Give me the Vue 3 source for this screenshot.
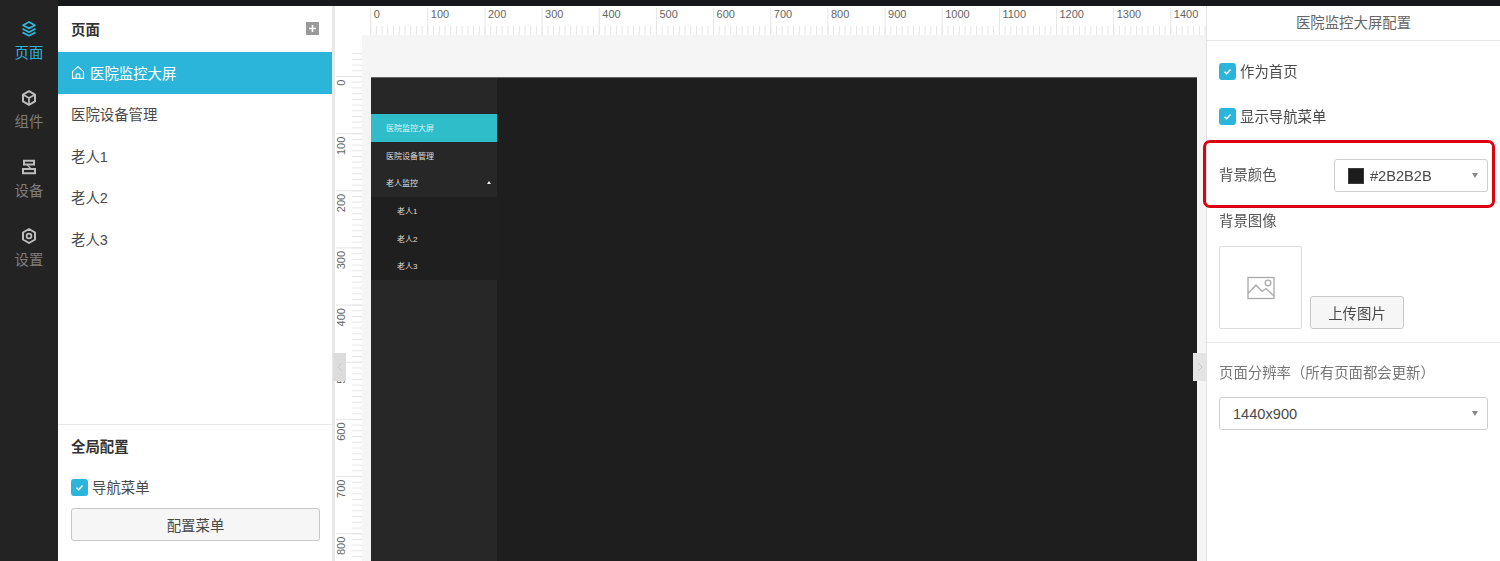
<script setup>
const SCALE = 0.5715
const hMajors = Array.from({ length: 15 }, (_, i) => i * 100)
const vMajors = Array.from({ length: 9 }, (_, i) => i * 100)
const hOrigin = 8.7
const vOrigin = 41.5
const hMinor = Array.from({ length: 150 }, (_, i) => +(hOrigin + i * 10 * SCALE).toFixed(1))
const vMinor = Array.from({ length: 96 }, (_, i) => +(i * 10 * SCALE + vOrigin - 40 * SCALE).toFixed(1))
const hx = (n) => +(hOrigin + n * SCALE).toFixed(1)
const vy = (n) => +(vOrigin + n * SCALE).toFixed(1)
const navItems = [
  { label: '页面', icon: 'layers', active: true },
  { label: '组件', icon: 'cube' },
  { label: '设备', icon: 'device' },
  { label: '设置', icon: 'gear' }
]
const pages = ['医院设备管理', '老人1', '老人2', '老人3']
const subs = ['老人1', '老人2', '老人3']
</script>

<template>
  <div class="app">
    <div class="topbar"><span class="top-left"></span></div>
    <div class="body">
      <nav class="nav">
        <div v-for="n in navItems" :key="n.label" class="nav-item" :class="{ active: n.active }">
          <svg class="nav-icon" width="18" height="18" viewBox="0 0 18 18" fill="none" stroke="currentColor" stroke-width="2" stroke-linejoin="round">
            <template v-if="n.icon === 'layers'">
              <path d="M9 2 15 5.2 9 8.4 3 5.2Z" stroke-width="1.8" />
              <path d="M2.5 8.8 9 12.2 15.5 8.8" stroke-width="1.8" />
              <path d="M2.5 12.4 9 15.8 15.5 12.4" stroke-width="1.8" />
            </template>
            <template v-else-if="n.icon === 'cube'">
              <path d="M9 2.2 15 5.6V12.4L9 15.8 3 12.4V5.6Z" />
              <path d="M3.2 5.8 9 9 14.8 5.8M9 9V15.6" stroke-width="1.7" />
            </template>
            <template v-else-if="n.icon === 'device'">
              <path d="M4 2.8H14V6.6H4Z" stroke-linejoin="miter" />
              <path d="M7 6.6 11 11" stroke-width="1.4" />
              <path d="M3 11H15V15.2H3Z" stroke-linejoin="miter" />
            </template>
            <template v-else>
              <path d="M9 2 15 5.5V12.5L9 16 3 12.5V5.5Z" />
              <circle cx="9" cy="9" r="2.4" stroke-width="1.8" />
            </template>
          </svg>
          <span class="nav-label">{{ n.label }}</span>
        </div>
      </nav>

      <aside class="sidebar">
        <header class="side-head">
          <strong>页面</strong>
          <span class="plus">
            <svg width="13" height="13" viewBox="0 0 13 13"><path d="M6.5 3V10M3 6.5H10" stroke="#fff" stroke-width="1.6" /></svg>
          </span>
        </header>
        <div class="page-row current">
          <svg width="14" height="15" viewBox="0 0 14 15" fill="none" stroke="#fff" stroke-width="1.1" stroke-linejoin="round">
            <path d="M1.5 6.6 7 1.6 12.5 6.6V13.4H1.5Z" />
            <path d="M5.2 13.4V9H8.8V13.4" />
          </svg>
          <span>医院监控大屏</span>
        </div>
        <div v-for="p in pages" :key="p" class="page-row">{{ p }}</div>
        <div class="global">
          <strong class="global-title">全局配置</strong>
          <label class="check-row">
            <span class="check"><svg width="11" height="11" viewBox="0 0 11 11" fill="none"><path d="M2.5 5.7 4.7 7.8 8.5 3.6" stroke="#fff" stroke-width="1.5" /></svg></span>
            <span>导航菜单</span>
          </label>
          <button class="btn wide">配置菜单</button>
        </div>
      </aside>

      <main class="canvas">
        <div class="ruler-top">
          <div class="corner"></div>
          <svg class="h-ruler" width="844" height="29">
            <line v-for="x in hMinor" :key="x" :x1="x" :x2="x" y1="20" y2="29" class="tick" />
            <g v-for="m in hMajors" :key="m">
              <line :x1="hx(m)" :x2="hx(m)" y1="2" y2="29" class="tick" />
              <text :x="hx(m) + 3" y="11.5" class="r-text">{{ m }}</text>
            </g>
          </svg>
        </div>
        <div class="ruler-row">
          <svg class="v-ruler" width="27" height="526">
            <line v-for="y in vMinor" :key="y" x1="17" x2="27" :y1="y" :y2="y" class="tick" />
            <g v-for="m in vMajors" :key="m">
              <line x1="1" x2="27" :y1="vy(m)" :y2="vy(m)" class="tick" />
              <text :transform="`translate(10 ${vy(m) + 3}) rotate(-90)`" text-anchor="end" class="r-text">{{ m }}</text>
            </g>
          </svg>
          <div class="stage">
            <div class="doc">
              <div class="doc-side">
                <div class="doc-item on">医院监控大屏</div>
                <div class="doc-item">医院设备管理</div>
                <div class="doc-item between"><span>老人监控</span><i class="mini-caret"></i></div>
                <div class="doc-subs">
                  <div v-for="s in subs" :key="s" class="doc-sub">{{ s }}</div>
                </div>
              </div>
            </div>
          </div>
        </div>
        <div class="handle left"><svg width="6" height="10" viewBox="0 0 6 10" fill="none"><path d="M5 1 1 5 5 9" stroke="#c8c8c8" /></svg></div>
        <div class="handle right"><svg width="6" height="10" viewBox="0 0 6 10" fill="none"><path d="M1 1 5 5 1 9" stroke="#c8c8c8" /></svg></div>
      </main>

      <aside class="panel">
        <header class="panel-head">医院监控大屏配置</header>
        <div class="panel-checks">
          <label class="check-row">
            <span class="check"><svg width="11" height="11" viewBox="0 0 11 11" fill="none"><path d="M2.5 5.7 4.7 7.8 8.5 3.6" stroke="#fff" stroke-width="1.5" /></svg></span>
            <span>作为首页</span>
          </label>
          <label class="check-row">
            <span class="check"><svg width="11" height="11" viewBox="0 0 11 11" fill="none"><path d="M2.5 5.7 4.7 7.8 8.5 3.6" stroke="#fff" stroke-width="1.5" /></svg></span>
            <span>显示导航菜单</span>
          </label>
        </div>
        <div class="color-row">
          <span class="label">背景颜色</span>
          <div class="select color-select">
            <span class="swatch"></span>
            <span class="sel-text">#2B2B2B</span>
            <i class="caret"></i>
          </div>
          <div class="highlight"></div>
        </div>
        <div class="image-block">
          <span class="label">背景图像</span>
          <div class="image-row">
            <div class="image-box">
              <svg width="28" height="24" viewBox="0 0 28 24" fill="none" stroke="#a9a9a9" stroke-width="1.3">
                <rect x="1" y="1.5" width="26" height="21" />
                <path d="M1 17.5 9 9 15 15.5 19 12.5 27 20" />
                <circle cx="21" cy="7" r="2.8" />
              </svg>
            </div>
            <button class="btn upload">上传图片</button>
          </div>
        </div>
        <div class="res-block">
          <span class="label muted">页面分辨率（所有页面都会更新）</span>
          <div class="select res-select">
            <span class="sel-text">1440x900</span>
            <i class="caret"></i>
          </div>
        </div>
      </aside>
    </div>
  </div>
</template>

<style>
html, body { margin: 0; background: #fff; overflow: hidden; }
</style>

<style scoped>
.app {
  width: 1500px;
  height: 561px;
  overflow: hidden;
  filter: blur(0.3px);
  display: flex;
  flex-direction: column;
  font-family: "Liberation Sans", "Noto Sans CJK SC", sans-serif;
  color: #4a4a4a;
}
.topbar { height: 6px; flex: none; background: #17181c; display: flex; }
.top-left { width: 58px; background: #232323; }
.body { flex: 1; min-height: 0; display: flex; }

.nav { width: 58px; flex: none; background: #232323; padding-top: 14px; box-sizing: border-box; }
.nav-item { height: 69px; display: flex; flex-direction: column; align-items: center; color: #7d7d7d; }
.nav-item .nav-icon { color: #bdbdbd; }
.nav-item.active, .nav-item.active .nav-icon { color: #2bb5da; }
.nav-label { font-size: 14.4px; line-height: 20px; margin-top: 5px; }

.sidebar { width: 274px; flex: none; background: #fff; display: flex; flex-direction: column; }
.side-head { height: 46px; display: flex; align-items: center; justify-content: space-between; padding: 0 13px 2px 13px; box-sizing: border-box; flex: none; }
.side-head strong { font-size: 14.4px; color: #333; }
.plus { width: 13px; height: 13px; background: #9a9a9a; display: flex; }
.page-row { height: 41.6px; flex: none; padding: 0 0 2px 13px; box-sizing: border-box; display: flex; align-items: center; font-size: 14.4px; color: #4a4a4a; }
.page-row.current { height: 42px; background: #2bb5da; color: #fff; gap: 5px; }
.global { margin-top: auto; height: 137px; box-sizing: border-box; border-top: 1px solid #e8e8e8; padding: 12px 12px 0 13px; display: flex; flex-direction: column; }
.global-title { font-size: 14.4px; color: #333; line-height: 20px; }
.global .check-row { margin-top: 22px; }
.check-row { display: flex; align-items: center; gap: 4px; font-size: 14.4px; color: #4a4a4a; height: 17px; }
.check-row > span:last-child { position: relative; top: -1px; }
.check { width: 17px; height: 17px; border-radius: 3px; background: #2bb5da; display: flex; align-items: center; justify-content: center; flex: none; }
.btn { font: inherit; font-size: 14.4px; color: #4a4a4a; background: #f6f6f6; border: 1px solid #c8c8c8; border-radius: 3px; height: 33px; padding: 0 0 1px; }
.wide { width: 249px; margin-top: 12px; }

.canvas { width: 874px; flex: none; position: relative; border-left: 3px solid #e9e9e9; box-sizing: border-box; display: flex; flex-direction: column; background: #fff; }
.ruler-top { height: 29px; flex: none; display: flex; }
.corner { width: 27px; flex: none; }
.h-ruler, .v-ruler { display: block; flex: none; }
.tick { stroke: #e6e6e6; stroke-width: 1; }
.r-text { font-size: 11px; fill: #666; }
.ruler-row { flex: 1; min-height: 0; display: flex; }
.stage { flex: 1; background: #f5f5f5; padding: 42px 9px 0; box-sizing: border-box; min-width: 0; }
.doc { height: 600px; background: #1e1e1e; display: flex; border-top: 1px solid #666; }
.doc-side { width: 126px; background: #272727; padding-top: 36px; box-sizing: border-box; color: #ddd; font-size: 8px; }
.doc-item { height: 27.5px; display: flex; align-items: center; padding: 0 6px 0 15px; }
.doc-item.on { background: #2ebdc9; color: #d8f2f4; }
.doc-item.between { justify-content: space-between; }
.mini-caret { width: 0; height: 0; border-left: 2px solid transparent; border-right: 2px solid transparent; border-bottom: 3px solid #eee; }
.doc-subs { background: #1f1f1f; }
.doc-sub { height: 27.8px; display: flex; align-items: center; padding-left: 26px; }

.handle { position: absolute; top: 347px; width: 13px; height: 28px; background: #dcdcdc; display: flex; align-items: center; justify-content: center; }
.handle.left { left: -2px; }
.handle.right { right: 0; background: #e4e4e4; }

.panel { flex: 1; min-width: 0; background: #fff; border-left: 1px solid #e3e3e3; display: flex; flex-direction: column; box-sizing: border-box; font-size: 14.4px; }
.panel-head { height: 35px; flex: none; box-sizing: border-box; border-bottom: 1px solid #e8e8e8; display: flex; align-items: center; justify-content: center; color: #666; font-size: 14.4px; padding-bottom: 3px; }
.panel-checks { padding: 22px 12px 0; display: flex; flex-direction: column; gap: 28px; flex: none; }
.color-row { position: relative; height: 33px; margin-top: 34px; padding: 0 12px; display: flex; align-items: center; justify-content: space-between; flex: none; }
.color-row .label { position: relative; top: -1px; }
.label { color: #555; font-size: 14.4px; line-height: 20px; }
.muted { color: #777; text-spacing-trim: space-all; }
.select { position: relative; border: 1px solid #cfcfcf; border-radius: 3px; height: 33px; box-sizing: border-box; display: flex; align-items: center; background: #fff; }
.color-select { width: 154px; padding-left: 13px; gap: 6px; }
.swatch { width: 16px; height: 16px; background: #1c1c1c; border: 1px solid #3a3a3a; box-sizing: border-box; }
.sel-text { font-size: 14.6px; color: #4a4a4a; }
.caret { position: absolute; right: 9px; top: 13px; width: 0; height: 0; border: 3.5px solid transparent; border-top: 5px solid #888; border-bottom: 0; }
.highlight { position: absolute; left: -4px; top: -19px; width: 292px; height: 68px; box-sizing: border-box; border: 3px solid #dc0010; border-radius: 7px; pointer-events: none; }
.image-block { padding: 19px 12px 0; display: flex; flex-direction: column; flex: none; height: 151px; box-sizing: border-box; border-bottom: 1px solid #e8e8e8; }
.image-row { display: flex; align-items: flex-end; gap: 8px; margin-top: 15px; }
.image-box { width: 83px; height: 83px; box-sizing: border-box; border: 1px solid #dcdcdc; border-radius: 2px; display: flex; align-items: center; justify-content: center; }
.upload { width: 94px; }
.res-block { padding: 20px 12px 0; display: flex; flex-direction: column; gap: 14px; }
.res-select { width: 269px; padding-left: 13px; }
</style>
